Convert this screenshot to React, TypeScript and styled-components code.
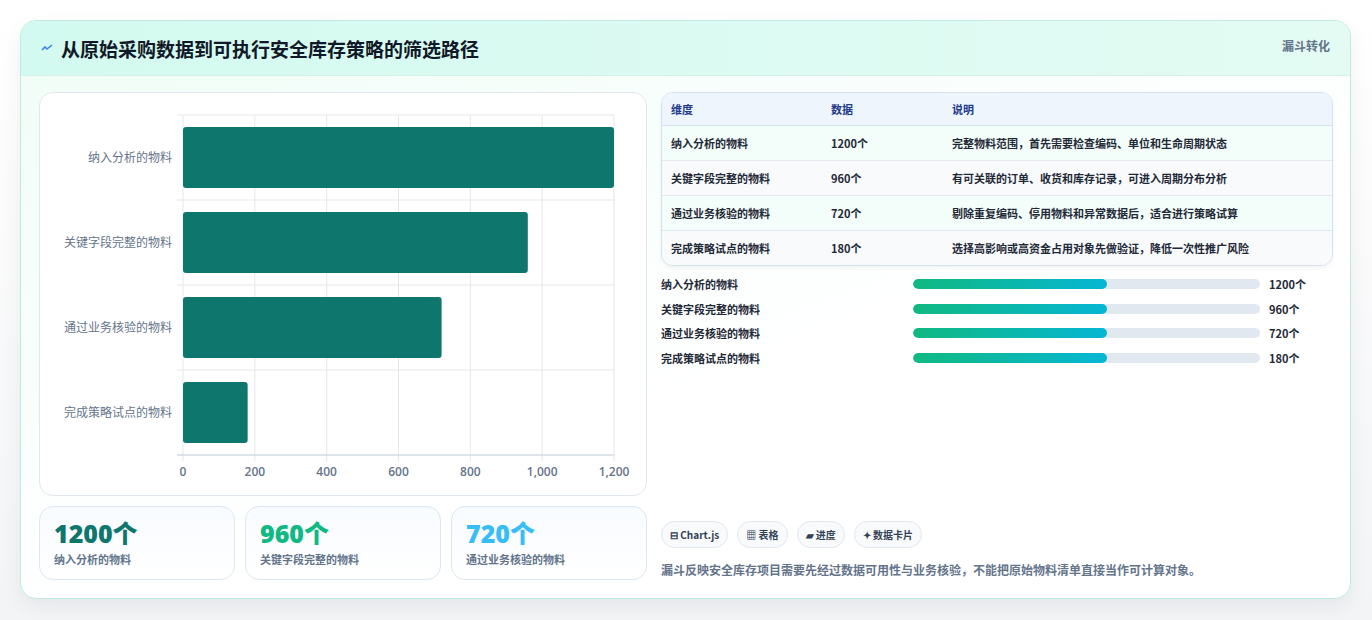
import styled, { createGlobalStyle } from "styled-components";

const Global = createGlobalStyle`
  html, body { margin: 0; padding: 0; background: #f3f4f6; }
  body { font-family: "Noto Sans CJK SC", "Noto Sans", sans-serif; }
`;

const Page = styled.div`
  width: 1372px;
  height: 620px;
  box-sizing: border-box;
  padding: 20px 21px 21px 20px;
  background: linear-gradient(180deg, #ffffff 0%, #f3f4f6 100%);
`;

const Card = styled.div`
  height: 100%;
  box-sizing: border-box;
  border: 1px solid #bfe9e2;
  border-radius: 16px;
  overflow: hidden;
  background: linear-gradient(160deg, #f0fdf7 0%, #ffffff 60%);
  box-shadow: 0 8px 20px rgba(15, 23, 42, 0.06);
  display: flex;
  flex-direction: column;
`;

const Header = styled.div`
  height: 55px;
  flex-shrink: 0;
  box-sizing: border-box;
  padding: 0 20px;
  display: flex;
  align-items: center;
  justify-content: space-between;
  background: linear-gradient(90deg, #d3faf0 0%, #e3fbf3 100%);
  border-bottom: 1px solid #d6f0ea;
`;

const Title = styled.h1`
  margin: 0;
  font-size: 19px;
  font-weight: 700;
  color: #111827;
  display: flex;
  align-items: center;
  gap: 8px;
`;

const Badge = styled.span`
  align-self: flex-start;
  margin-top: 16px;
  font-size: 12px;
  font-weight: 700;
  color: #64748b;
`;

const Body = styled.div`
  flex: 1;
  display: grid;
  grid-template-columns: 608px 672px;
  gap: 14px;
  padding: 16px 18px 18px 18px;
`;

const Left = styled.div`
  display: flex;
  flex-direction: column;
  gap: 10px;
`;

const ChartBox = styled.div`
  height: 404px;
  box-sizing: border-box;
  background: #fff;
  border: 1px solid #e2e8f0;
  border-radius: 14px;
`;

const Stats = styled.div`
  display: grid;
  grid-template-columns: repeat(3, 1fr);
  gap: 10px;
`;

const Stat = styled.div`
  height: 74px;
  box-sizing: border-box;
  padding: 10px 14px;
  border: 1px solid #dbe7f3;
  border-radius: 14px;
  background: linear-gradient(180deg, #f8fbff, #ffffff);
`;

const StatValue = styled.div<{ $color: string }>`
  font-family: "Open Sans", "Noto Sans CJK SC", sans-serif;
  font-size: 25px;
  font-weight: 800;
  line-height: 32px;
  color: ${(p) => p.$color};
`;

const StatLabel = styled.div`
  font-size: 11px;
  font-weight: 700;
  color: #64748b;
  margin-top: 2px;
`;

const Right = styled.div`
  display: flex;
  flex-direction: column;
`;

const Table = styled.table`
  width: 100%;
  border-collapse: separate;
  border-spacing: 0;
  border: 1px solid #d5e1ee;
  border-radius: 12px;
  overflow: hidden;
  font-size: 11px;
  font-weight: 700;
  background: #fff;
  box-shadow: 0 2px 4px rgba(15, 23, 42, 0.05);
`;

const Th = styled.th<{ $w?: string }>`
  text-align: left;
  height: 32px;
  padding: 0 9px;
  color: #1e3a8a;
  background: #eef5fd;
  border-bottom: 1px solid #d5e1ee;
  width: ${(p) => p.$w || "auto"};
`;

const Td = styled.td<{ $alt: boolean; $last: boolean }>`
  height: 34px;
  padding: 0 9px;
  color: #1f2937;
  background: ${(p) => (p.$alt ? "#f8fafc" : "#f3fdf9")};
  border-bottom: ${(p) => (p.$last ? "none" : "1px solid #e2e8f0")};
`;

const Bars = styled.div`
  margin-top: 10px;
  display: flex;
  flex-direction: column;
  gap: 8px;
`;

const BarRow = styled.div`
  display: grid;
  grid-template-columns: 252px 347px 1fr;
  align-items: center;
  gap: 0;
  font-size: 11px;
  font-weight: 700;
  color: #1f2937;
  height: 16.5px;
`;

const Track = styled.div`
  height: 10px;
  border-radius: 5px;
  background: #e2e8f0;
  overflow: hidden;
`;

const Fill = styled.div`
  height: 100%;
  border-radius: 5px;
  background: linear-gradient(90deg, #10b981, #06b6d4);
`;

const Value = styled.span`
  padding-left: 9px;
`;

const Footer = styled.div`
  margin-top: auto;
  display: flex;
  flex-direction: column;
  gap: 13px;
`;

const Tags = styled.div`
  display: flex;
  gap: 9px;
`;

const Tag = styled.span`
  height: 27px;
  box-sizing: border-box;
  padding: 0 8px;
  display: inline-flex;
  align-items: center;
  gap: 3px;
  border: 1px solid #e2e8f0;
  border-radius: 14px;
  background: #f8fafc;
  font-size: 10px;
  font-weight: 700;
  color: #334155;
`;

const Note = styled.p`
  margin: 0 0 2px 0;
  font-size: 12px;
  font-weight: 700;
  color: #64748b;
`;

const rows = [
  { name: "纳入分析的物料", value: 1200, desc: "完整物料范围，首先需要检查编码、单位和生命周期状态" },
  { name: "关键字段完整的物料", value: 960, desc: "有可关联的订单、收货和库存记录，可进入周期分布分析" },
  { name: "通过业务核验的物料", value: 720, desc: "剔除重复编码、停用物料和异常数据后，适合进行策略试算" },
  { name: "完成策略试点的物料", value: 180, desc: "选择高影响或高资金占用对象先做验证，降低一次性推广风险" },
];

function Chart() {
  const x0 = 143, x1 = 574, top = 22, bottom = 362;
  const band = (bottom - top) / 4;
  const scale = (v: number) => x0 + ((x1 - x0) * v) / 1200;
  const ticks = [0, 200, 400, 600, 800, 1000, 1200];
  return (
    <svg width="606" height="402" style={{ display: "block" }}>
      {ticks.map((t) => (
        <line key={t} x1={scale(t)} x2={scale(t)} y1={top} y2={bottom + 6} stroke="#e5e7eb" />
      ))}
      {[0, 1, 2, 3, 4].map((i) => (
        <line key={i} x1={x0 - 6} x2={x1} y1={top + band * i} y2={top + band * i} stroke="#e5e7eb" />
      ))}
      <line x1={x0 - 6} x2={x1} y1={bottom} y2={bottom} stroke="#cbd5e1" />
      {rows.map((r, i) => (
        <g key={r.name}>
          <rect x={x0} y={top + band * i + 12} width={scale(r.value) - x0} height={band - 24} rx="3" fill="#0f766e" />
          <text x={x0 - 11} y={top + band * i + band / 2 + 4} textAnchor="end" fontSize="12" fill="#64748b" fontFamily="Noto Sans CJK SC, sans-serif">
            {r.name}
          </text>
        </g>
      ))}
      {ticks.map((t) => (
        <text key={t} x={scale(t)} y={bottom + 21} textAnchor="middle" fontSize="12" fontWeight="600" fill="#64748b" fontFamily="Open Sans, sans-serif">
          {t.toLocaleString("en-US")}
        </text>
      ))}
    </svg>
  );
}

export default function App() {
  const colors = ["#0f766e", "#10b981", "#38bdf8"];
  return (
    <Page>
      <Global />
      <Card>
        <Header>
          <Title>
            <svg width="12" height="12" viewBox="0 0 12 12">
              <path d="M1 8 L4 5 L6 7 L11 3" stroke="#3b82f6" strokeWidth="1.6" fill="none" />
            </svg>
            从原始采购数据到可执行安全库存策略的筛选路径
          </Title>
          <Badge>漏斗转化</Badge>
        </Header>
        <Body>
          <Left>
            <ChartBox>
              <Chart />
            </ChartBox>
            <Stats>
              {rows.slice(0, 3).map((r, i) => (
                <Stat key={r.name}>
                  <StatValue $color={colors[i]}>{r.value}个</StatValue>
                  <StatLabel>{r.name}</StatLabel>
                </Stat>
              ))}
            </Stats>
          </Left>
          <Right>
            <Table>
              <thead>
                <tr>
                  <Th $w="142px">维度</Th>
                  <Th $w="103px">数据</Th>
                  <Th>说明</Th>
                </tr>
              </thead>
              <tbody>
                {rows.map((r, i) => (
                  <tr key={r.name}>
                    <Td $alt={i % 2 === 1} $last={i === 3}>{r.name}</Td>
                    <Td $alt={i % 2 === 1} $last={i === 3}>{r.value}个</Td>
                    <Td $alt={i % 2 === 1} $last={i === 3}>{r.desc}</Td>
                  </tr>
                ))}
              </tbody>
            </Table>
            <Bars>
              {rows.map((r) => (
                <BarRow key={r.name}>
                  <span>{r.name}</span>
                  <Track>
                    <Fill style={{ width: "56%" }} />
                  </Track>
                  <Value>{r.value}个</Value>
                </BarRow>
              ))}
            </Bars>
            <Footer>
              <Tags>
                <Tag>⊟ Chart.js</Tag>
                <Tag>▦ 表格</Tag>
                <Tag>▰ 进度</Tag>
                <Tag>✦ 数据卡片</Tag>
              </Tags>
              <Note>漏斗反映安全库存项目需要先经过数据可用性与业务核验，不能把原始物料清单直接当作可计算对象。</Note>
            </Footer>
          </Right>
        </Body>
      </Card>
    </Page>
  );
}
